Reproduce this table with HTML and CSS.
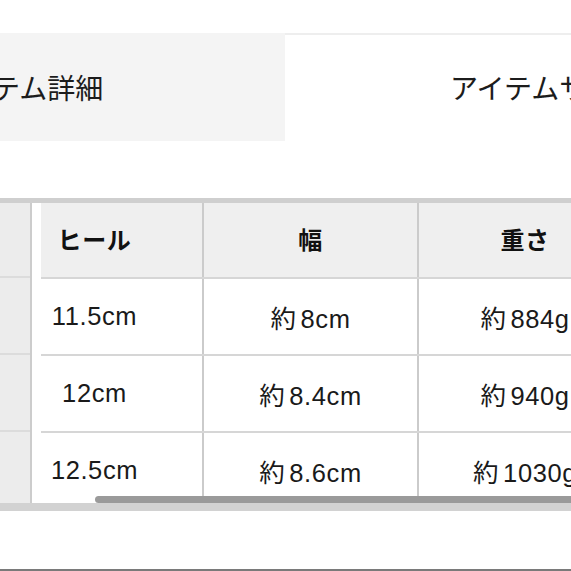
FILE: index.html
```html
<!DOCTYPE html>
<html lang="ja">
<head>
<meta charset="utf-8">
<link rel="stylesheet" href="styles.css">
</head>
<body>
<div class="page">
  <div class="tabs">
    <div class="tab tab-active">アイテム詳細</div>
    <div class="tab tab-other">アイテムサイズ</div>
  </div>
  <div class="table-frame">
    <div class="frozen">
      <div class="frozen-cell frozen-head"></div>
      <div class="frozen-cell"></div>
      <div class="frozen-cell"></div>
      <div class="frozen-cell"></div>
    </div>
    <div class="frozen-gap"></div>
    <div class="scroll">
      <table class="size-table">
        <thead>
          <tr>
            <th class="c1">ヒール</th>
            <th class="c2">幅</th>
            <th class="c3">重さ</th>
          </tr>
        </thead>
        <tbody>
          <tr><td>11.5cm</td><td><span class="approx">約</span>8cm</td><td><span class="approx">約</span>884g</td></tr>
          <tr><td>12cm</td><td><span class="approx">約</span>8.4cm</td><td><span class="approx">約</span>940g</td></tr>
          <tr><td>12.5cm</td><td><span class="approx">約</span>8.6cm</td><td><span class="approx">約</span>1030g</td></tr>
        </tbody>
      </table>
      <div class="thumb"></div>
    </div>
  </div>
  <div class="bottom-space"></div>
</div>
</body>
</html>
```

FILE: styles.css
```css
* { box-sizing: border-box; }
html, body { margin: 0; padding: 0; background: #ffffff; }
body {
  width: 571px;
  height: 571px;
  overflow: hidden;
  font-family: "Liberation Sans", "Noto Sans CJK JP", sans-serif;
  color: #1a1a1a;
}
.page {
  width: 571px;
  height: 571px;
  overflow: hidden;
  padding-top: 33px;
  border-bottom: 2px solid #7a7a7a;
  display: flex;
  flex-direction: column;
}
.tabs {
  display: flex;
  height: 108px;
  margin-left: -62px;
  flex: none;
}
.tab {
  flex: none;
  height: 108px;
  display: flex;
  align-items: center;
  font-family: "Noto Sans CJK JP", sans-serif;
  font-size: 28px;
  white-space: nowrap;
  color: #1c1c1c;
}
.tab-active {
  width: 347px;
  background: #f4f4f4;
  padding-left: 0;
}
.tab-other {
  width: 400px;
  background: #ffffff;
  border-top: 2px solid #eeeeee;
  padding-left: 165px;
  padding-bottom: 2px;
}
.table-frame {
  margin-top: 57px;
  flex: none;
  height: 313px;
  border-top: 5px solid #cfcfcf;
  border-bottom: 8px solid #d2d2d2;
  display: flex;
  overflow: hidden;
}
.frozen {
  width: 32px;
  flex: none;
  background: #ececec;
  border-right: 2px solid #cccccc;
  display: flex;
  flex-direction: column;
}
.frozen-cell {
  height: 77px;
  border-bottom: 2px solid #dcdcdc;
  flex: none;
}
.frozen-head { height: 75px; }
.frozen-gap {
  width: 9px;
  flex: none;
  background: #ffffff;
}
.scroll {
  flex: 1;
  overflow: hidden;
  position: relative;
}
.size-table {
  margin-left: -54px;
  border-collapse: collapse;
  table-layout: fixed;
  width: 645px;
  font-size: 25.5px;
  letter-spacing: 0.6px;
}
.size-table th,
.size-table td {
  padding: 0;
  text-align: center;
  border-bottom: 2px solid #d6d6d6;
  border-right: 2px solid #cbcbcb;
  white-space: nowrap;
}
.size-table th {
  height: 75px;
  background: #efefef;
  font-family: "Noto Sans CJK JP", sans-serif;
  font-weight: 700;
  font-size: 24px;
  color: #111111;
  padding-bottom: 4px;
}
.size-table td {
  height: 77px;
  background: #ffffff;
}
.approx {
  font-family: "Noto Sans CJK JP", sans-serif;
  margin-right: 4px;
}
.c1 { width: 216px; }
.c2 { width: 215px; }
.c3 { width: 214px; }
.thumb {
  position: absolute;
  left: 54px;
  right: -20px;
  bottom: 0;
  height: 7px;
  border-radius: 4px;
  background: #9a9a9a;
}
.bottom-space { flex: 1; }
```
